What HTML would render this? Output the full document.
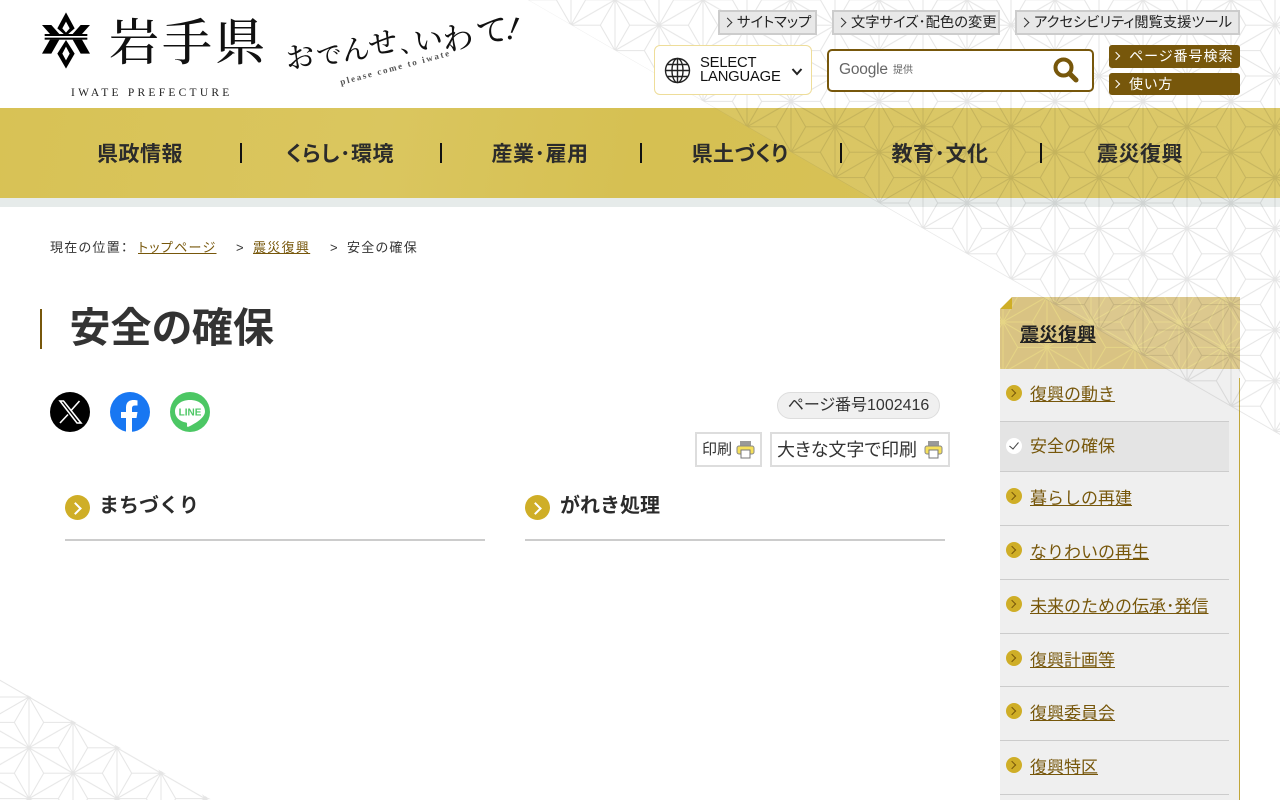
<!DOCTYPE html>
<html lang="ja"><head><meta charset="utf-8"><title>安全の確保</title>
<style>
*{box-sizing:border-box;margin:0;padding:0}
html,body{width:1280px;height:800px;overflow:hidden;background:#fff}
body{position:relative;font-family:"Liberation Sans","Noto Sans CJK JP",sans-serif;font-feature-settings:"palt";color:#333}
.a{position:absolute;white-space:nowrap}
.top{height:25px;top:10px;background:#e8e8e8;border:2px solid #ccc;font-size:14.3px;line-height:23px;color:#222;padding-left:17px}
.top:before,.bb:before{content:"";position:absolute;left:4px;top:7px;width:6px;height:6px;border-top:1.5px solid #333;border-right:1.5px solid #333;transform:rotate(45deg)}
.bb{left:1109px;width:131px;background:#77570b;border-radius:3px;color:#fff;font-size:14px;padding-left:20px;letter-spacing:1px}
.bb:before{left:4px;top:8px;width:5px;height:5px;border-color:#fff;border-width:1px 1px 0 0}
#nav{left:0;top:108px;width:1280px;height:90px;background:linear-gradient(100deg,#d8c255,#dac65f 30%,#d6c052 50%,#d9c45c)}
#band{left:0;top:198px;width:1280px;height:9px;background:#e6ebea}
.n{top:138px;width:200px;text-align:center;font-size:21px;font-weight:700;color:#2b2b2b;line-height:34px;letter-spacing:.5px}
.sep{top:143px;width:2px;height:20px;background:#111}
.bc{top:239px;font-size:13px;line-height:18px;letter-spacing:1.3px;color:#333}
.bc u{color:#77570b}
.h2t{top:492px;font-size:20px;font-weight:700;line-height:28px;color:#2b2b2b;font-feature-settings:normal}
.dot{width:25px;height:25px;border-radius:50%;background:#cfae27;top:495px}
.dot:after{content:"";position:absolute;left:6px;top:9px;width:7px;height:7px;border-top:2.2px solid #fff;border-right:2.2px solid #fff;transform:rotate(45deg)}
.line{top:539px;width:420px;height:2px;background:#ccc}
.pb{top:432px;height:35px;border:2px solid #ddd;background:#fff;color:#333}
.sl{left:1030px;font-size:17px;line-height:24px;color:#77570b;text-decoration:underline;font-feature-settings:normal}
.sd{left:1006px;width:16px;height:16px;border-radius:50%;background:#cfae27}
.sd:after{content:"";position:absolute;left:3px;top:5px;width:5px;height:5px;border-top:1.5px solid #77570b;border-right:1.5px solid #77570b;transform:rotate(45deg)}
.ss{left:1000px;width:229px;height:1px;background:#ccc}
</style></head><body>

<!-- nav -->
<div class="a" id="nav"></div><div class="a" id="band"></div>

<!-- sidebar base -->
<div class="a" style="left:1000px;top:369px;width:240px;height:431px;background:#efefef"></div>
<div class="a" style="left:1239px;top:378px;width:1px;height:422px;background:#c0a63a"></div>
<div class="a" style="left:1000px;top:422px;width:229px;height:49px;background:#e4e4e4"></div>
<svg class="a" style="left:1000px;top:297px" width="240" height="72">
<defs><pattern id="ph" patternUnits="userSpaceOnUse" width="88" height="50.800" patternTransform="translate(3,25)"><path d="M0 0V50.800M88 0V50.800M44 -25.400V76.200M0 0L88 50.800M88 0L0 50.800M14.670 25.400L0 0M14.670 25.400L0 50.800M14.670 25.400H44M73.330 25.400L88 0M73.330 25.400L88 50.800M73.330 25.400H44M29.330 0H0M29.330 0L44 25.400M58.670 0H88M58.670 0L44 25.400M29.330 50.800H0M29.330 50.800L44 25.400M58.670 50.800H88M58.670 50.800L44 25.400" fill="none" stroke="#e6d585" stroke-width="1"/></pattern></defs>
<rect width="240" height="72" fill="#d9c383"/><rect width="240" height="72" fill="url(#ph)"/>
<path d="M12 0L0 12H12Z" fill="#cfae27"/><path d="M0 0H12L0 12Z" fill="#fff"/>
</svg>

<!-- asanoha overlays -->
<svg class="a" style="left:0;top:0;pointer-events:none" width="1280" height="800">
<defs>
<pattern id="p1" patternUnits="userSpaceOnUse" width="88" height="50.800" patternTransform="translate(879,203)"><path d="M0 0V50.800M88 0V50.800M44 -25.400V76.200M0 0L88 50.800M88 0L0 50.800M14.670 25.400L0 0M14.670 25.400L0 50.800M14.670 25.400H44M73.330 25.400L88 0M73.330 25.400L88 50.800M73.330 25.400H44M29.330 0H0M29.330 0L44 25.400M58.670 0H88M58.670 0L44 25.400M29.330 50.800H0M29.330 50.800L44 25.400M58.670 50.800H88M58.670 50.800L44 25.400" fill="none" stroke="#000" stroke-opacity=".1" stroke-width="1"/></pattern>
<pattern id="p2" patternUnits="userSpaceOnUse" width="88" height="50.800" patternTransform="translate(29,697)"><path d="M0 0V50.800M88 0V50.800M44 -25.400V76.200M0 0L88 50.800M88 0L0 50.800M14.670 25.400L0 0M14.670 25.400L0 50.800M14.670 25.400H44M73.330 25.400L88 0M73.330 25.400L88 50.800M73.330 25.400H44M29.330 0H0M29.330 0L44 25.400M58.670 0H88M58.670 0L44 25.400M29.330 50.800H0M29.330 50.800L44 25.400M58.670 50.800H88M58.670 50.800L44 25.400" fill="none" stroke="#000" stroke-opacity=".1" stroke-width="1"/></pattern>
</defs>
<polygon points="528,0 1280,0 1280,435" fill="#fff" fill-opacity=".09"/>
<polygon points="528,0 1280,0 1280,435" fill="url(#p1)"/>
<polygon points="0,679.500 212,800 0,800" fill="url(#p2)"/>
</svg>

<!-- logo -->
<svg class="a" style="left:0;top:0" width="530" height="105">
<g transform="translate(30,5) scale(.3333)" fill="#000">
<path fill-rule="evenodd" d="M108 22L134 70L108 93L82 70ZM108 50L97 70L108 83L119 70Z"/>
<path d="M36 60H64L88 87H60ZM180 60H152L128 87H156Z"/>
<rect x="44" y="87" width="128" height="6"/><rect x="44" y="98" width="128" height="6"/>
<path d="M60 104H88L64 146H36ZM156 104H128L152 146H180Z"/>
<path fill-rule="evenodd" d="M108 105L134 146L108 191L82 146ZM108 125L97 146L108 166L119 146Z"/>
</g>
<text x="109" y="60" font-family="'Noto Serif CJK SC',serif" font-size="50" font-weight="500" letter-spacing="3" fill="#111">岩手県</text>
<text x="71" y="96" font-family="'Liberation Serif',serif" font-size="11.5" letter-spacing="3.250" fill="#222">IWATE PREFECTURE</text>
<g font-family="'Noto Serif CJK SC',serif" fill="#111" font-weight="500" text-anchor="middle">
<text transform="translate(301,67) rotate(-8)" font-size="29">お</text>
<text transform="translate(330,64) rotate(-8)" font-size="25">で</text>
<text transform="translate(357,59) rotate(-8)" font-size="28">ん</text>
<text transform="translate(384,53) rotate(-8)" font-size="29">せ</text>
<text transform="translate(407,52) rotate(-8)" font-size="24">、</text>
<text transform="translate(429,50) rotate(-8)" font-size="29">い</text>
<text transform="translate(459,49) rotate(-8)" font-size="31">わ</text>
<text transform="translate(493,42) rotate(-8)" font-size="32">て</text>
</g>
<text transform="translate(505,38) rotate(12)" font-family="'Liberation Serif',serif" font-size="34" font-style="italic" fill="#111">!</text>
<text transform="translate(341,85) rotate(-15)" font-family="'Liberation Serif',serif" font-size="9" font-weight="700" letter-spacing="1.800" fill="#555">please come to iwate</text>
</svg>

<!-- top links -->
<div class="a top" style="left:718px;width:99px">サイトマップ</div>
<div class="a top" style="left:832px;width:168px">文字サイズ･配色の変更</div>
<div class="a top" style="left:1015px;width:225px">アクセシビリティ閲覧支援ツール</div>

<!-- language -->
<div class="a" style="left:654px;top:45px;width:158px;height:50px;background:#fff;border:1px solid #eedd99;border-radius:6px"></div>
<svg class="a" style="left:664px;top:57px" width="28" height="28" fill="none" stroke="#222" stroke-width="1.4"><circle cx="13.500" cy="13.500" r="12"/><ellipse cx="13.500" cy="13.500" rx="5.500" ry="12"/><path d="M13.500 1.500V25.500M1.500 13.500H25.500M3.500 7.500H23.500M3.500 19.500H23.500"/></svg>
<div class="a" style="left:700px;top:56px;font-size:14.800px;line-height:14px;color:#111;letter-spacing:-.2px">SELECT<br>LANGUAGE</div>
<svg class="a" style="left:791px;top:67px" width="12" height="10" fill="none" stroke="#222" stroke-width="2"><path d="M1.500 2L6 7L10.500 2"/></svg>

<!-- search -->
<div class="a" style="left:827px;top:49px;width:267px;height:43px;background:#fff;border:2px solid #77570b;border-radius:5px"></div>
<div class="a" style="left:839px;top:60px;font-size:15.500px;line-height:20px;color:#666;letter-spacing:-.2px">Google</div>
<div class="a" style="left:893px;top:64px;font-size:10px;line-height:14px;color:#666">提供</div>
<svg class="a" style="left:1052px;top:56px" width="28" height="28" fill="none" stroke="#77570b"><circle cx="11.500" cy="11.500" r="8" stroke-width="4"/><path d="M17.500 17.500L24 24" stroke-width="5" stroke-linecap="round"/></svg>

<div class="a bb" style="top:45px;height:23px;line-height:22px">ページ番号検索</div>
<div class="a bb" style="top:73px;height:22px;line-height:22px">使い方</div>

<!-- nav text -->
<div class="a n" style="left:40px">県政情報</div><div class="a sep" style="left:240px"></div>
<div class="a n" style="left:240px">くらし･環境</div><div class="a sep" style="left:440px"></div>
<div class="a n" style="left:440px">産業･雇用</div><div class="a sep" style="left:640px"></div>
<div class="a n" style="left:640px">県土づくり</div><div class="a sep" style="left:840px"></div>
<div class="a n" style="left:840px">教育･文化</div><div class="a sep" style="left:1040px"></div>
<div class="a n" style="left:1040px">震災復興</div>

<!-- breadcrumb -->
<div class="a bc" style="left:50px">現在の位置：</div>
<div class="a bc" style="left:138px"><u>トップページ</u></div>
<div class="a bc" style="left:236px">&gt;</div>
<div class="a bc" style="left:253px"><u>震災復興</u></div>
<div class="a bc" style="left:330px">&gt;</div>
<div class="a bc" style="left:347px">安全の確保</div>

<!-- title -->
<div class="a" style="left:40px;top:309px;width:2px;height:40px;background:#77570b"></div>
<div class="a" style="left:69.500px;top:300px;font-size:41px;font-weight:700;line-height:56px;color:#333">安全の確保</div>

<!-- social -->
<svg class="a" style="left:50px;top:392px" width="160" height="40">
<circle cx="20" cy="20" r="20" fill="#000"/>
<path d="M10 9L27 31H31L13.500 9ZM29.500 9L21.500 18M18 22.500L10 31" fill="none" stroke="#fff" stroke-width="1.600"/>
<circle cx="80" cy="20" r="20" fill="#1877f2"/>
<path d="M76 40V26H71V20H76V15.500C76 10.500 79 8 83.500 8C85.500 8 87.500 8.400 87.500 8.400V13.500H85C82.500 13.500 82 15 82 16.500V20H87.500L86.500 26H82V40Z" fill="#fff"/>
<circle cx="140" cy="20" r="20" fill="#4cc764"/>
<path d="M140 8C131 8 125 13 125 19.500C125 25 129.500 29.500 136 30.500C137.500 30.800 137 32.500 137 34C137 35 138 35 139 34.500C143 32.500 155 26.500 155 19.500C155 13 149 8 140 8Z" fill="#fff"/>
<text x="140" y="23.500" text-anchor="middle" font-family="'Liberation Sans',sans-serif" font-weight="700" font-size="10" fill="#4cc764">LINE</text>
</svg>

<!-- page no -->
<div class="a" style="left:777px;top:392px;width:163px;height:27px;background:#f0f0f0;border:1px solid #ddd;border-radius:14px;text-align:center;font-size:16px;line-height:26px;color:#333">ページ番号1002416</div>
<div class="a pb" style="left:695px;width:67px;font-size:15px;line-height:32px;padding-left:5px">印刷</div>
<div class="a pb" style="left:770px;width:180px;font-size:18px;line-height:32px;padding-left:5px">大きな文字で印刷</div>
<svg class="a" style="left:736px;top:440px" width="20" height="20"><rect x="4" y="1" width="11" height="6" fill="#999"/><rect x="1" y="6" width="17" height="8" rx="2" fill="#f6e05a" stroke="#888"/><rect x="5" y="10" width="9" height="8" fill="#fff" stroke="#777"/></svg>
<svg class="a" style="left:924px;top:440px" width="20" height="20"><rect x="4" y="1" width="11" height="6" fill="#999"/><rect x="1" y="6" width="17" height="8" rx="2" fill="#f6e05a" stroke="#888"/><rect x="5" y="10" width="9" height="8" fill="#fff" stroke="#777"/></svg>

<!-- headings -->
<div class="a dot" style="left:65px"></div><div class="a h2t" style="left:99px">まちづくり</div><div class="a line" style="left:65px"></div>
<div class="a dot" style="left:525px"></div><div class="a h2t" style="left:560px">がれき処理</div><div class="a line" style="left:525px"></div>

<!-- sidebar text -->
<div class="a" style="left:1020px;top:323px;font-size:19px;font-weight:700;line-height:26px;color:#222;text-decoration:underline;font-feature-settings:normal">震災復興</div>
<div class="a sd" style="top:385px"></div><div class="a sl" style="top:383px">復興の動き</div>
<div class="a ss" style="top:421px"></div>
<div class="a" style="left:1006px;top:438px;width:16px;height:16px;border-radius:50%;background:#fff"></div>
<svg class="a" style="left:1006px;top:438px" width="16" height="16" fill="none" stroke="#444" stroke-width="1"><path d="M3.500 8L7 11L12.500 4.500"/></svg>
<div class="a sl" style="top:435px;text-decoration:none">安全の確保</div>
<div class="a ss" style="top:471px"></div>
<div class="a sd" style="top:488px"></div><div class="a sl" style="top:487px">暮らしの再建</div>
<div class="a ss" style="top:525px"></div>
<div class="a sd" style="top:542px"></div><div class="a sl" style="top:541px">なりわいの再生</div>
<div class="a ss" style="top:579px"></div>
<div class="a sd" style="top:596px"></div><div class="a sl" style="top:595px">未来のための伝承･発信</div>
<div class="a ss" style="top:633px"></div>
<div class="a sd" style="top:650px"></div><div class="a sl" style="top:649px">復興計画等</div>
<div class="a ss" style="top:686px"></div>
<div class="a sd" style="top:703px"></div><div class="a sl" style="top:702px">復興委員会</div>
<div class="a ss" style="top:740px"></div>
<div class="a sd" style="top:757px"></div><div class="a sl" style="top:756px">復興特区</div>
<div class="a ss" style="top:794px"></div>
</body></html>
